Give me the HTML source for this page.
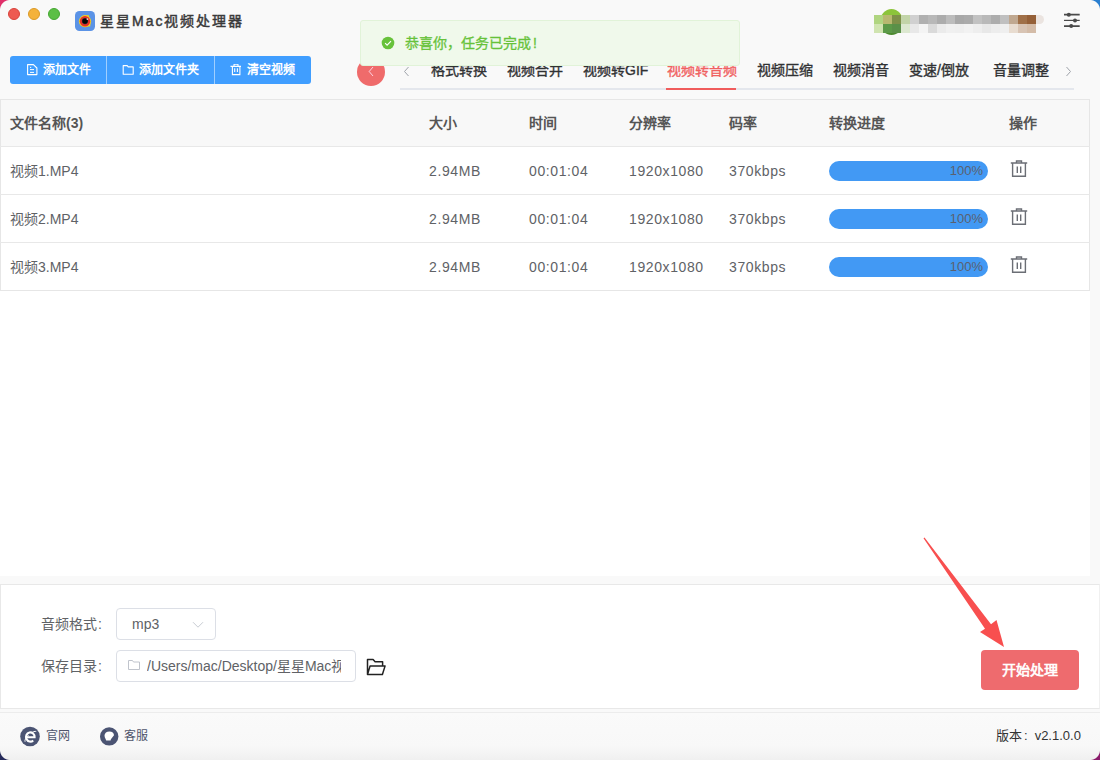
<!DOCTYPE html>
<html lang="zh-CN"><head><meta charset="utf-8">
<style>
*{margin:0;padding:0;box-sizing:border-box;}
html,body{width:1100px;height:760px;overflow:hidden;}
body{position:relative;background:#f9f9f9;font-family:"Liberation Sans",sans-serif;color:#606266;font-size:14px;}
.abs{position:absolute;}
.corner{position:absolute;width:10px;height:10px;}
.tl{left:0;top:0;background:radial-gradient(circle at 10px 10px,transparent 9.5px,#e0306a 10.5px);}
.tr{right:0;top:0;background:radial-gradient(circle at 0 10px,transparent 9.5px,#2a7fd0 10.5px);}
.bl{left:0;bottom:0;background:radial-gradient(circle at 10px 0,transparent 9.5px,#262a5a 10.5px);}
.br{right:0;bottom:0;background:radial-gradient(circle at 0 0,transparent 9.5px,#8a1a6a 10.5px);}
.light{position:absolute;top:8px;width:12px;height:12px;border-radius:50%;}
.title{position:absolute;left:100px;top:11px;font-size:14px;-webkit-text-stroke-width:0.45px;letter-spacing:2px;color:#3a3a3a;line-height:20px;white-space:nowrap;}
.btngrp{position:absolute;left:10px;top:56px;width:301px;height:28px;background:#409eff;border-radius:3px;}
.btn{position:absolute;top:0;height:28px;color:#fff;font-size:12px;font-weight:bold;line-height:28px;white-space:nowrap;}
.sep{position:absolute;top:0;width:1px;height:28px;background:rgba(255,255,255,0.5);}
.tab{position:absolute;top:61px;font-size:14px;line-height:18px;color:#303133;-webkit-text-stroke-width:0.35px;white-space:nowrap;}
.tabline{position:absolute;left:400px;top:88px;width:674px;height:2px;background:#e4e7ed;}
.msg{position:absolute;left:360px;top:20px;width:380px;height:46px;background:#f0f9eb;border:1px solid #e1f3d8;border-radius:3px;}
.tbl{position:absolute;left:0;top:99px;width:1090px;}
.cell{position:absolute;font-size:14px;line-height:20px;white-space:nowrap;}
.hline{position:absolute;left:0;width:1090px;height:1px;background:#e8e8e8;}
.prog{position:absolute;left:829px;width:159px;height:20px;border-radius:10px;background:#4299f4;}
.prog span{position:absolute;right:5px;top:0;line-height:20px;font-size:13px;color:#5a6170;}
.lbl{position:absolute;left:41px;font-size:14px;color:#606266;line-height:20px;white-space:nowrap;}
.inp{position:absolute;left:116px;height:32px;border:1px solid #dcdfe6;border-radius:4px;background:#fff;}
</style></head><body>

<!-- traffic lights -->
<div class="light" style="left:8px;background:#ee5a52;border:0.5px solid #d9443c;"></div>
<div class="light" style="left:28px;background:#f4b23a;border:0.5px solid #dc9a26;"></div>
<div class="light" style="left:48px;background:#5bbf45;border:0.5px solid #45a832;"></div>

<!-- app icon -->
<svg class="abs" style="left:75px;top:11px" width="20" height="20" viewBox="0 0 20 20">
<rect x="0" y="0" width="20" height="20" rx="4.5" fill="#5b93e6"/>
<circle cx="10" cy="10.2" r="6.1" fill="#f3d21a"/>
<path d="M10 10.2H15.3V15.4H10Z" fill="#f3d21a"/>
<path d="M11 4.3H13.9V7.5Z" fill="#f3d21a"/>
<circle cx="10" cy="10.2" r="5.2" fill="#e3302a"/>
<circle cx="10" cy="10.1" r="3.1" fill="#3a3a3a"/>
<circle cx="10" cy="10.1" r="2.7" fill="#050505"/>
<circle cx="12.4" cy="8.1" r="0.9" fill="#f4d8d8"/>
</svg>
<div class="title">星星Mac视频处理器</div>

<!-- mosaic -->
<div class="abs" style="left:880px;top:9px;width:23px;height:26px;border-radius:50%;background:linear-gradient(#8cc43a 50%,#4c8a2e 50%);"></div>
<div class="abs" style="left:874px;top:15px;width:9px;height:9px;background:#b0d580"></div><div class="abs" style="left:883px;top:15px;width:9px;height:9px;background:#b8b870"></div><div class="abs" style="left:892px;top:15px;width:9px;height:9px;background:#7e9048"></div><div class="abs" style="left:901px;top:15px;width:9px;height:9px;background:#c2d4a8"></div><div class="abs" style="left:910px;top:15px;width:9px;height:9px;background:#d0d0d0"></div><div class="abs" style="left:919px;top:15px;width:9px;height:9px;background:#b0b0b0"></div><div class="abs" style="left:928px;top:15px;width:9px;height:9px;background:#b8b8b8"></div><div class="abs" style="left:937px;top:15px;width:9px;height:9px;background:#acacac"></div><div class="abs" style="left:946px;top:15px;width:9px;height:9px;background:#bcbcbc"></div><div class="abs" style="left:955px;top:15px;width:9px;height:9px;background:#a8a8a8"></div><div class="abs" style="left:964px;top:15px;width:9px;height:9px;background:#ababab"></div><div class="abs" style="left:973px;top:15px;width:9px;height:9px;background:#c2c2c2"></div><div class="abs" style="left:982px;top:15px;width:9px;height:9px;background:#b9b9b9"></div><div class="abs" style="left:991px;top:15px;width:9px;height:9px;background:#adadad"></div><div class="abs" style="left:1000px;top:15px;width:9px;height:9px;background:#c0c0c0"></div><div class="abs" style="left:1009px;top:15px;width:9px;height:9px;background:#c0a890"></div><div class="abs" style="left:1018px;top:15px;width:9px;height:9px;background:#a07048"></div><div class="abs" style="left:1027px;top:15px;width:9px;height:9px;background:#956038"></div>
<div class="abs" style="left:874px;top:24px;width:9px;height:9px;background:#d0e4b0"></div><div class="abs" style="left:883px;top:24px;width:9px;height:9px;background:#5c9a48"></div><div class="abs" style="left:892px;top:24px;width:9px;height:9px;background:#5a9048"></div><div class="abs" style="left:901px;top:24px;width:9px;height:9px;background:#dce8d0"></div><div class="abs" style="left:910px;top:24px;width:9px;height:9px;background:#e8e8e8"></div><div class="abs" style="left:919px;top:24px;width:9px;height:9px;background:#f4f4f4"></div><div class="abs" style="left:928px;top:24px;width:9px;height:9px;background:#dadada"></div><div class="abs" style="left:937px;top:24px;width:9px;height:9px;background:#ebebeb"></div><div class="abs" style="left:946px;top:24px;width:9px;height:9px;background:#f0f0f0"></div><div class="abs" style="left:955px;top:24px;width:9px;height:9px;background:#efefef"></div><div class="abs" style="left:964px;top:24px;width:9px;height:9px;background:#f2f2f2"></div><div class="abs" style="left:973px;top:24px;width:9px;height:9px;background:#eeeeee"></div><div class="abs" style="left:982px;top:24px;width:9px;height:9px;background:#e8e8e8"></div><div class="abs" style="left:991px;top:24px;width:9px;height:9px;background:#ededed"></div><div class="abs" style="left:1000px;top:24px;width:9px;height:9px;background:#efefef"></div><div class="abs" style="left:1009px;top:24px;width:9px;height:9px;background:#e8dcd0"></div><div class="abs" style="left:1018px;top:24px;width:9px;height:9px;background:#d8c4b4"></div><div class="abs" style="left:1027px;top:24px;width:9px;height:9px;background:#d4bca8"></div>
<div class="abs" style="left:1036px;top:15px;width:8px;height:9px;border-radius:0 5px 5px 0;background:#ebe4e0"></div>
<svg class="abs" style="left:1060px;top:8px" width="24" height="24" viewBox="0 0 24 24">
<path d="M4 6.7h15.7M4 18.1h15.7" stroke="#4a4a4a" stroke-width="1.7"/><path d="M4 12.4h15.7" stroke="#4a4a4a" stroke-width="1.2"/>
<circle cx="8.8" cy="6.7" r="2" fill="#4a4a4a"/><circle cx="15" cy="12.4" r="2" fill="#4a4a4a"/><circle cx="11.2" cy="18.1" r="2" fill="#4a4a4a"/>
</svg>
<!-- buttons -->
<div class="btngrp">
  <div class="sep" style="left:96px"></div>
  <div class="sep" style="left:204px"></div>
  <div class="btn" style="left:17px">
    <svg style="position:absolute;left:0;top:8px" width="11" height="12" viewBox="0 0 11 12"><path d="M.6 .6H6.4L9.9 4V10.6H.6Z" fill="none" stroke="#fff" stroke-width="1.1" stroke-linejoin="round"/><path d="M3 3.4h1.2M3 5.6h4M3 8.4h4" stroke="#fff" stroke-width="1"/></svg>
    <span style="position:absolute;left:16px">添加文件</span>
  </div>
  <div class="btn" style="left:112px">
    <svg style="position:absolute;left:0;top:9px" width="12" height="10" viewBox="0 0 12 10"><path d="M1.2 .6h4l1 1.3h5v7.3h-10z" fill="none" stroke="#fff" stroke-width="1.1" stroke-linejoin="round"/></svg>
    <span style="position:absolute;left:17px">添加文件夹</span>
  </div>
  <div class="btn" style="left:221px">
    <svg style="position:absolute;left:-1px;top:8px" width="12" height="12" viewBox="0 0 12 12"><path d="M.5 2.4H11M4 2.4V.7Q4 .3 4.5 .3H7.5Q8 .3 8 .7V2.4M2.4 2.4V10.6H9.9V2.4M4.7 4.3V8M7.4 4.3V8" fill="none" stroke="#fff" stroke-width="1.1"/></svg>
    <span style="position:absolute;left:16px">清空视频</span>
  </div>
</div>

<!-- tabs -->
<div class="abs" style="left:357px;top:58px;width:28px;height:28px;border-radius:50%;background:#ef6b6b;"></div>
<svg class="abs" style="left:367px;top:66px" width="8" height="11" viewBox="0 0 8 11"><path d="M6 1L2.2 5.5 6 10" fill="none" stroke="#fde" stroke-width="0.9"/></svg>
<svg class="abs" style="left:403px;top:66px" width="7" height="11" viewBox="0 0 7 11"><path d="M5.5 1L1.5 5.5l4 4.5" fill="none" stroke="#a0a4ab" stroke-width="1"/></svg>
<div class="tab" style="left:431px">格式转换</div>
<div class="tab" style="left:507px">视频合并</div>
<div class="tab" style="left:583px">视频转GIF</div>
<div class="tab" style="left:667px;color:#f06060">视频转音频</div>
<div class="tab" style="left:757px">视频压缩</div>
<div class="tab" style="left:833px">视频消音</div>
<div class="tab" style="left:909px">变速/倒放</div>
<div class="tab" style="left:993px">音量调整</div>
<svg class="abs" style="left:1065px;top:66px" width="7" height="11" viewBox="0 0 7 11"><path d="M1.5 1l4 4.5-4 4.5" fill="none" stroke="#a0a4ab" stroke-width="1"/></svg>
<div class="tabline"></div>
<div class="abs" style="left:666px;top:88px;width:70px;height:2px;background:#f05c5c;"></div>

<!-- message -->
<div class="msg">
  <svg style="position:absolute;left:20px;top:15px" width="14" height="14" viewBox="0 0 14 14"><circle cx="7" cy="7" r="6.3" fill="#67c23a"/><path d="M4.1 7.1l2 2 3.9-3.9" fill="none" stroke="#fff" stroke-width="1.15"/></svg>
  <div style="position:absolute;left:44px;top:12px;font-size:14px;line-height:20px;color:#67c23a;-webkit-text-stroke-width:0.3px;white-space:nowrap;">恭喜你，任务已完成<span style="margin-left:2px">!</span></div>
</div>

<!-- table area -->
<div class="abs" style="left:0;top:99px;width:1090px;height:477px;background:#fff;"></div>
<div class="abs" style="left:0;top:99px;width:1090px;height:192px;border:1px solid #e6e6e6;"></div>
<div class="abs" style="left:1px;top:100px;width:1088px;height:46px;background:#f8f8f8;"></div>
<div class="hline" style="top:146px"></div>
<div class="hline" style="top:194px"></div>
<div class="hline" style="top:242px"></div>

<div class="cell" style="left:10px;top:113px;font-weight:bold;color:#555">文件名称(3)</div>
<div class="cell" style="left:429px;top:113px;font-weight:bold;color:#555">大小</div>
<div class="cell" style="left:529px;top:113px;font-weight:bold;color:#555">时间</div>
<div class="cell" style="left:629px;top:113px;font-weight:bold;color:#555">分辨率</div>
<div class="cell" style="left:729px;top:113px;font-weight:bold;color:#555">码率</div>
<div class="cell" style="left:829px;top:113px;font-weight:bold;color:#555">转换进度</div>
<div class="cell" style="left:1009px;top:113px;font-weight:bold;color:#555">操作</div>

<div class="cell" style="left:10px;top:161px">视频1.MP4</div>
<div class="cell" style="left:429px;top:161px;letter-spacing:0.6px">2.94MB</div>
<div class="cell" style="left:529px;top:161px;letter-spacing:0.6px">00:01:04</div>
<div class="cell" style="left:629px;top:161px;letter-spacing:0.6px">1920x1080</div>
<div class="cell" style="left:729px;top:161px;letter-spacing:0.6px">370kbps</div>
<div class="prog" style="top:161px"><span>100%</span></div>
<svg class="abs" style="left:1010px;top:159px" width="18" height="19" viewBox="0 0 18 19"><path d="M.8 4H17.2M6.5 4V2h5v2M2.6 4V17.3H15.4V4M7.3 7.5v6.4M10.7 7.5v6.4" fill="none" stroke="#6b6e75" stroke-width="1.4"/></svg>
<div class="cell" style="left:10px;top:209px">视频2.MP4</div>
<div class="cell" style="left:429px;top:209px;letter-spacing:0.6px">2.94MB</div>
<div class="cell" style="left:529px;top:209px;letter-spacing:0.6px">00:01:04</div>
<div class="cell" style="left:629px;top:209px;letter-spacing:0.6px">1920x1080</div>
<div class="cell" style="left:729px;top:209px;letter-spacing:0.6px">370kbps</div>
<div class="prog" style="top:209px"><span>100%</span></div>
<svg class="abs" style="left:1010px;top:207px" width="18" height="19" viewBox="0 0 18 19"><path d="M.8 4H17.2M6.5 4V2h5v2M2.6 4V17.3H15.4V4M7.3 7.5v6.4M10.7 7.5v6.4" fill="none" stroke="#6b6e75" stroke-width="1.4"/></svg>
<div class="cell" style="left:10px;top:257px">视频3.MP4</div>
<div class="cell" style="left:429px;top:257px;letter-spacing:0.6px">2.94MB</div>
<div class="cell" style="left:529px;top:257px;letter-spacing:0.6px">00:01:04</div>
<div class="cell" style="left:629px;top:257px;letter-spacing:0.6px">1920x1080</div>
<div class="cell" style="left:729px;top:257px;letter-spacing:0.6px">370kbps</div>
<div class="prog" style="top:257px"><span>100%</span></div>
<svg class="abs" style="left:1010px;top:255px" width="18" height="19" viewBox="0 0 18 19"><path d="M.8 4H17.2M6.5 4V2h5v2M2.6 4V17.3H15.4V4M7.3 7.5v6.4M10.7 7.5v6.4" fill="none" stroke="#6b6e75" stroke-width="1.4"/></svg>

<!-- bottom panel -->
<div class="abs" style="left:0;top:584px;width:1100px;height:125px;background:#fff;border:1px solid #e8e8e8;border-right-color:#f0f0f0;"></div>
<div class="lbl" style="top:614px">音频格式<span style="margin-left:1px">:</span></div>
<div class="lbl" style="top:656px">保存目录<span style="margin-left:1px">:</span></div>
<div class="inp" style="top:608px;width:100px;">
  <span style="position:absolute;left:15px;top:6px;line-height:18px;font-size:14px;color:#606266">mp3</span>
  <svg style="position:absolute;left:75px;top:12px" width="12" height="8" viewBox="0 0 12 8"><path d="M1 1.2l5 5 5-5" fill="none" stroke="#c8ccd3" stroke-width="1"/></svg>
</div>
<div class="inp" style="top:650px;width:240px;overflow:hidden;">
  <svg style="position:absolute;left:11px;top:9px" width="12" height="10" viewBox="0 0 12 10"><path d="M.5 .5h4l1 1.5h6v7.5h-11z" fill="none" stroke="#c0c4cc" stroke-width="1"/></svg>
  <span style="position:absolute;left:30px;top:6px;width:194px;overflow:hidden;line-height:18px;font-size:14px;color:#606266;white-space:nowrap">/Users/mac/Desktop/星星Mac视频处理器</span>
</div>
<svg class="abs" style="left:366px;top:658px" width="20" height="18" viewBox="0 0 20 18"><path d="M1.5 16.5V1.5h5.6l2 2.2h7.5v4M1.5 16.5l2.6-8.6h15l-2.7 8.6z" fill="none" stroke="#222" stroke-width="1.5" stroke-linejoin="round"/></svg>

<div class="abs" style="left:981px;top:650px;width:98px;height:40px;border-radius:4px;background:#ee6b6e;color:#fff;-webkit-text-stroke-width:0.6px;font-size:14px;line-height:40px;text-align:center;">开始处理</div>

<svg class="abs" style="left:0;top:0" width="1100" height="760" viewBox="0 0 1100 760"><path d="M924.5 537.4 L991 624.2 L996.5 620 L1004 647 L980 632 L985 628.8 L923.5 538.2 Z" fill="#f84f4f"/></svg>

<!-- footer -->
<div class="abs" style="left:0;top:712px;width:1100px;height:48px;background:linear-gradient(#fafafa 0%,#f8f8f8 70%,#f0f0f0 100%);border-top:1px solid #ececec;"></div>
<svg class="abs" style="left:20px;top:726px" width="21" height="21" viewBox="0 0 21 21"><circle cx="10" cy="10.5" r="9.8" fill="#4b5473"/><path d="M6.6 11.3H14.6A4.3 4.6 0 1 0 13.2 14.4" stroke="#fff" stroke-width="2.1" fill="none"/><path d="M5.2 15.8C4.3 14.6 6 11.5 8.5 9.2M12.5 6.3C14.5 5.2 16 5 16.2 5.8" stroke="#fff" stroke-width="1" fill="none"/></svg>
<div class="abs" style="left:46px;top:727px;font-size:12px;line-height:18px;color:#4f556b">官网</div>
<svg class="abs" style="left:100px;top:727px" width="19" height="19" viewBox="0 0 19 19"><circle cx="9.2" cy="9.4" r="9.2" fill="#4b5473"/><path d="M4.5 8.6C4.5 5.9 6.7 4.4 9.4 4.4C12.2 4.4 14 5.9 14 8.2L10.9 12.3L10.6 13.4H6.2L5.6 12C4.9 11 4.5 9.9 4.5 8.6Z" fill="#fff"/></svg>
<div class="abs" style="left:124px;top:727px;font-size:12px;line-height:18px;color:#4f556b">客服</div>
<div class="abs" style="left:996px;top:727px;font-size:13px;line-height:18px;color:#333;white-space:nowrap">版本<span style="margin:0 7px 0 2px">:</span>v2.1.0.0</div>

<div class="corner tl"></div><div class="corner tr"></div><div class="corner bl"></div><div class="corner br"></div>
</body></html>
